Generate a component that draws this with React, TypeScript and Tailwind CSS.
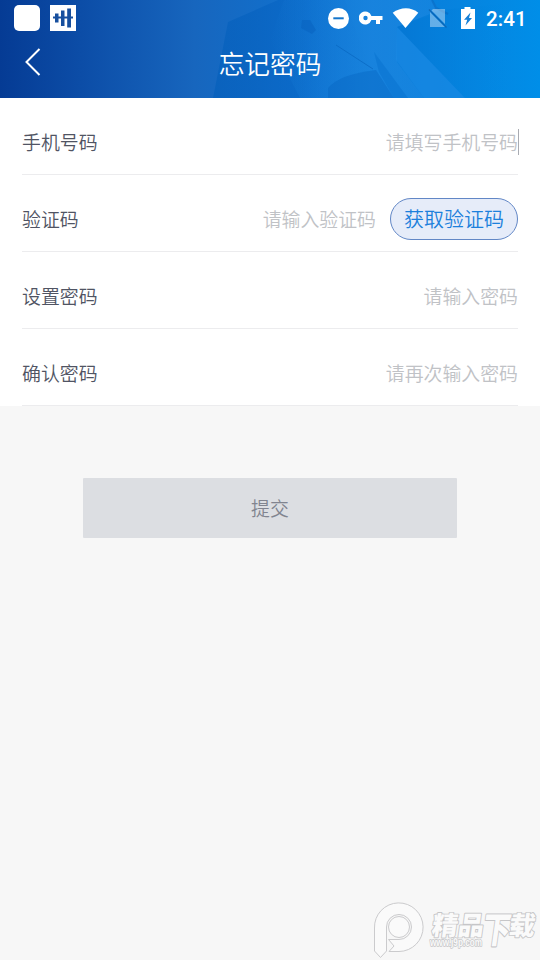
import type { ReactNode } from "react"

function HeaderBackground() {
  return (
    <svg className="absolute inset-0 h-full w-full" viewBox="0 0 540 98" preserveAspectRatio="none">
      <defs>
        <linearGradient id="sky" x1="0" y1="0" x2="1" y2="0">
          <stop offset="0" stopColor="#053b94" />
          <stop offset="0.15" stopColor="#0c4da7" />
          <stop offset="0.36" stopColor="#1766be" />
          <stop offset="0.6" stopColor="#0f74d2" />
          <stop offset="0.8" stopColor="#0880dc" />
          <stop offset="1" stopColor="#008ee8" />
        </linearGradient>
        <linearGradient id="tower" x1="0" y1="0" x2="1" y2="0">
          <stop offset="0" stopColor="#0660bc" stopOpacity="0.75" />
          <stop offset="0.55" stopColor="#0664c4" stopOpacity="0.5" />
          <stop offset="1" stopColor="#0c70d0" stopOpacity="0" />
        </linearGradient>
        <linearGradient id="glass" x1="0" y1="0" x2="1" y2="0">
          <stop offset="0" stopColor="#1c86de" stopOpacity="0" />
          <stop offset="0.6" stopColor="#2089e2" stopOpacity="0.6" />
          <stop offset="1" stopColor="#2089e2" stopOpacity="0.45" />
        </linearGradient>
        <linearGradient id="panel" x1="0" y1="0" x2="1" y2="0">
          <stop offset="0" stopColor="#0577d4" />
          <stop offset="1" stopColor="#008ee8" stopOpacity="0" />
        </linearGradient>
      </defs>
      <rect width="540" height="98" fill="url(#sky)" />
      <path d="M213 98 228 22 278 0H345L380 98Z" fill="url(#tower)" />
      <path d="M270 40 284 0H432L440 12 397 27V62L424 98H300Z" fill="url(#glass)" />
      <path d="M302 20l8 0 6 10-4 4-11-6Z" fill="#0660bd" opacity="0.45" />
      <path d="M397 27 440 10 540 0V98H464Z" fill="url(#panel)" />
      <path d="M397 27 465 98H424L396 60Z" fill="#1c8ae4" opacity="0.6" />
      <path d="M374 52 408 98H394L379 72Z" fill="#0a72d0" opacity="0.55" />
      <path d="M328 98V88Q340 74 376 70L394 98Z" fill="#0564c1" opacity="0.4" />
      <path d="M336 45 373 69" stroke="#0663bd" strokeWidth="1" opacity="0.6" />
      <path d="M432 0 436 8 448 14" stroke="#0664bb" strokeWidth="2" fill="none" opacity="0.5" />
    </svg>
  )
}

function StatusBar() {
  return (
    <div className="flex h-9 items-center pl-3.5 text-white">
      <div className="h-[26px] w-[26px] rounded-[5px] bg-white" />
      <svg className="ml-2.5" width="26" height="26" viewBox="0 0 26 26">
        <path d="M0 0h26v26H0z" fill="#fff" />
        <path d="M3 12.500h20" stroke="#174f9e" strokeWidth="2" />
        <path d="M5 8.500h3.500v9H5zM11 5.500h3.500v15.500H11zM17.200 3.500h3.800v19h-3.800z" fill="#174f9e" />
      </svg>

      <svg className="ml-[252px]" width="21" height="21" viewBox="0 0 21 21">
        <circle cx="10.500" cy="10.500" r="10.500" fill="#fff" />
        <path d="M5.300 10.300h10.400" stroke="#1475cb" strokeWidth="2" />
      </svg>
      <svg className="ml-2.5" width="24" height="14" viewBox="0 0 24 14">
        <path
          d="M12.400 5A6.500 6.500 0 1 0 12.400 9H17v4h4V9h2.500V5ZM6.500 9.200a2.200 2.200 0 1 1 0-4.400 2.200 2.200 0 0 1 0 4.400Z"
          fill="#fff"
        />
      </svg>
      <svg className="ml-[9px]" width="28" height="20" viewBox="0 0 28 20">
        <path d="M.7 4.800C8.500-1.300 19.500-1.300 26.300 4.800L13.500 20Z" fill="#fff" />
      </svg>
      <svg className="ml-[7px]" width="22" height="20" viewBox="0 0 22 20">
        <path d="M6 1h12v15L4.500 2.500ZM3 4 18 19H3Z" fill="#fff" opacity="0.38" />
        <path d="M2 1.500 19.500 19.500" stroke="#0b5fae" strokeWidth="1.300" opacity="0.75" />
      </svg>
      <svg className="ml-[11px]" width="16" height="22" viewBox="0 0 16 22">
        <path d="M4.500 0h6v2H15v20H1V2h3.500Z" fill="#fff" />
        <path d="M10.500 5.500 4 12.800h3.200L5.500 18.500 12 11H9Z" fill="#1680d6" />
      </svg>
      <span className="ml-[10px] mt-0.5 font-[Roboto] text-[20.500px] leading-none font-medium tracking-[0.1px]">2:41</span>
    </div>
  )
}

function Header() {
  return (
    <header className="relative h-[98px] overflow-hidden">
      <HeaderBackground />
      <div className="relative">
        <StatusBar />
        <div className="grid h-[52px] grid-cols-[80px_1fr_80px] items-center text-white">
          <button className="pl-6" aria-label="返回">
            <svg width="18" height="28" viewBox="0 0 18 28" fill="none" stroke="#fff" strokeWidth="2">
              <path d="M15.500 1 2.500 14l13 13" />
            </svg>
          </button>
          <h1 className="pt-0.5 text-center text-[25.700px] leading-none font-[350]">忘记密码</h1>
        </div>
      </div>
    </header>
  )
}

function Field({ label, placeholder, children }: { label: string; placeholder: string; children?: ReactNode }) {
  return (
    <div className="flex h-[77px] items-center border-b border-[#ececee] pt-3 text-[18.900px]">
      <label className="text-[#505463]">{label}</label>
      <span className="ml-auto text-[#c0c2c6]">{placeholder}</span>
      {children}
    </div>
  )
}

function Watermark() {
  return (
    <svg className="absolute right-0 bottom-0" width="170" height="62" viewBox="370 898 170 62">
      <g fill="#fafafa" stroke="#cbcbcd" strokeWidth="1">
        <path d="M374.500 951V928A24.300 24.300 0 1 1 399 951.500H389L394 946 388.500 939.500H399A12.500 12.500 0 1 0 386.500 927V951L380.500 957.500Z" />
        <circle cx="399" cy="927" r="10.500" />
      </g>
      <g
        fontFamily="'Noto Sans CJK SC', sans-serif"
        fontWeight="900"
        fill="#fafafa"
        stroke="#c6c6c8"
        strokeLinejoin="round"
        paintOrder="stroke"
      >
        <text transform="translate(431 934.500) skewX(-8)" fontSize="26" strokeWidth="1.800" textLength="52" lengthAdjust="spacingAndGlyphs">
          精品
        </text>
        <text transform="translate(481 943) skewX(-8) scale(1 1.300)" fontSize="28" strokeWidth="1.600">
          下
        </text>
        <text transform="translate(508 934.500) skewX(-8)" fontSize="26" strokeWidth="1.800">
          载
        </text>
        <text x="430" y="946" fontFamily="'Liberation Sans', sans-serif" fontSize="10" strokeWidth="1.500" textLength="52" lengthAdjust="spacingAndGlyphs">
          www.j9p.com
        </text>
      </g>
    </svg>
  )
}

export default function App() {
  return (
    <div className="relative h-[960px] w-[540px] overflow-hidden bg-[#f7f7f7] font-['Noto_Sans_CJK_SC',sans-serif] font-[350]">
      <Header />

      <main>
        <div className="bg-white px-[22px]">
          <Field label="手机号码" placeholder="请填写手机号码">
            <span className="-mr-px h-[26px] w-px bg-[#a9abb2]" />
          </Field>
          <Field label="验证码" placeholder="请输入验证码">
            <button className="ml-3.5 h-[42px] w-[128px] rounded-full border border-[#6287c6] bg-[#e6ecf9] text-[20px] leading-none text-[#1c80dc]">
              获取验证码
            </button>
          </Field>
          <Field label="设置密码" placeholder="请输入密码" />
          <Field label="确认密码" placeholder="请再次输入密码" />
        </div>

        <button className="mx-auto mt-[72px] block h-[60px] w-[374px] rounded-[1px] bg-[#dcdee2] text-[18.900px] text-[#81848f]">
          提交
        </button>
      </main>

      <Watermark />
    </div>
  )
}
